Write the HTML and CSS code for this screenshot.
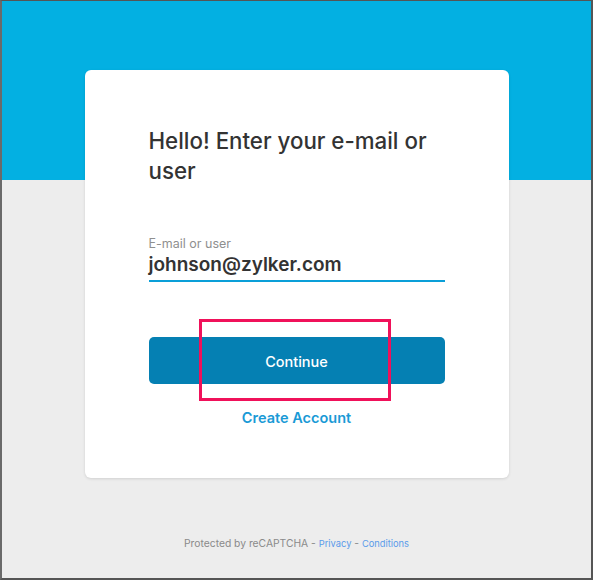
FILE: index.html
```html
<!DOCTYPE html>
<html>
<head>
<meta charset="utf-8">
<link rel="stylesheet" href="styles.css">
</head>
<body>
<div class="frame">
  <div class="hero"></div>
  <div class="stage">
    <div class="card">
      <h1 class="title">Hello! Enter your e-mail or user</h1>
      <div class="field">
        <label class="label">E-mail or user</label>
        <div class="value">johnson@zylker.com</div>
      </div>
      <div class="actions">
        <button class="btn">Continue</button>
        <div class="highlight"></div>
      </div>
      <a class="create">Create Account</a>
    </div>
    <div class="footer">Protected by reCAPTCHA - <a class="flink">Privacy</a> - <a class="flink">Conditions</a></div>
  </div>
</div>
</body>
</html>
```
FILE: styles.css
```css
* { box-sizing: border-box; }
html, body { margin: 0; padding: 0; }
body {
  width: 593px;
  height: 580px;
  font-family: "Inter", "Lato", sans-serif;
  background: #ededed;
}
.frame {
  position: relative;
  width: 593px;
  height: 580px;
  border-top: 1px solid #555;
  border-left: 2px solid #6a6a6a;
  border-right: 2px solid #555;
  border-bottom: 2px solid #555;
  background: #ededed;
  overflow: hidden;
}
.hero {
  height: 179px;
  background: #03b0e2;
}
.stage {
  margin-top: -110px;
  display: flex;
  flex-direction: column;
  align-items: center;
}
.card {
  width: 424px;
  height: 408px;
  background: #fff;
  border-radius: 6px;
  box-shadow: 0 1px 3px rgba(0,0,0,0.12);
  padding: 56px 64px 0 64px;
  display: flex;
  flex-direction: column;
}
.title {
  margin: 0;
  font-size: 22.3px;
  line-height: 30px;
  font-weight: 500;
  color: #333;
  width: 296px;
}
.field {
  margin-top: 50px;
  border-bottom: 2px solid #0a9fd8;
  padding-bottom: 3px;
}
.label {
  display: block;
  font-size: 12.5px;
  line-height: 15px;
  color: #8f8f8f;
}
.value {
  font-size: 19px;
  line-height: 24px;
  font-weight: 600;
  color: #333;
  margin-top: 2px;
}
.actions {
  position: relative;
  margin-top: 55px;
}
.btn {
  width: 100%;
  height: 47px;
  border: none;
  border-radius: 5px;
  background: #0580b3;
  color: #fff;
  font-family: inherit;
  font-size: 14.5px;
  font-weight: 500;
  padding-top: 2px;
}
.highlight {
  position: absolute;
  left: 50px;
  top: -18px;
  width: 192px;
  height: 82px;
  border: 3px solid #f0115a;
}
.create {
  margin-top: 24px;
  text-align: center;
  font-size: 14.5px;
  line-height: 20px;
  font-weight: 600;
  color: #1a9ad6;
}
.footer {
  margin-top: 59px;
  font-size: 10.3px;
  color: #8a8a8a;
}
.flink {
  font-size: 9.3px;
  color: #5b9bea;
}
```
